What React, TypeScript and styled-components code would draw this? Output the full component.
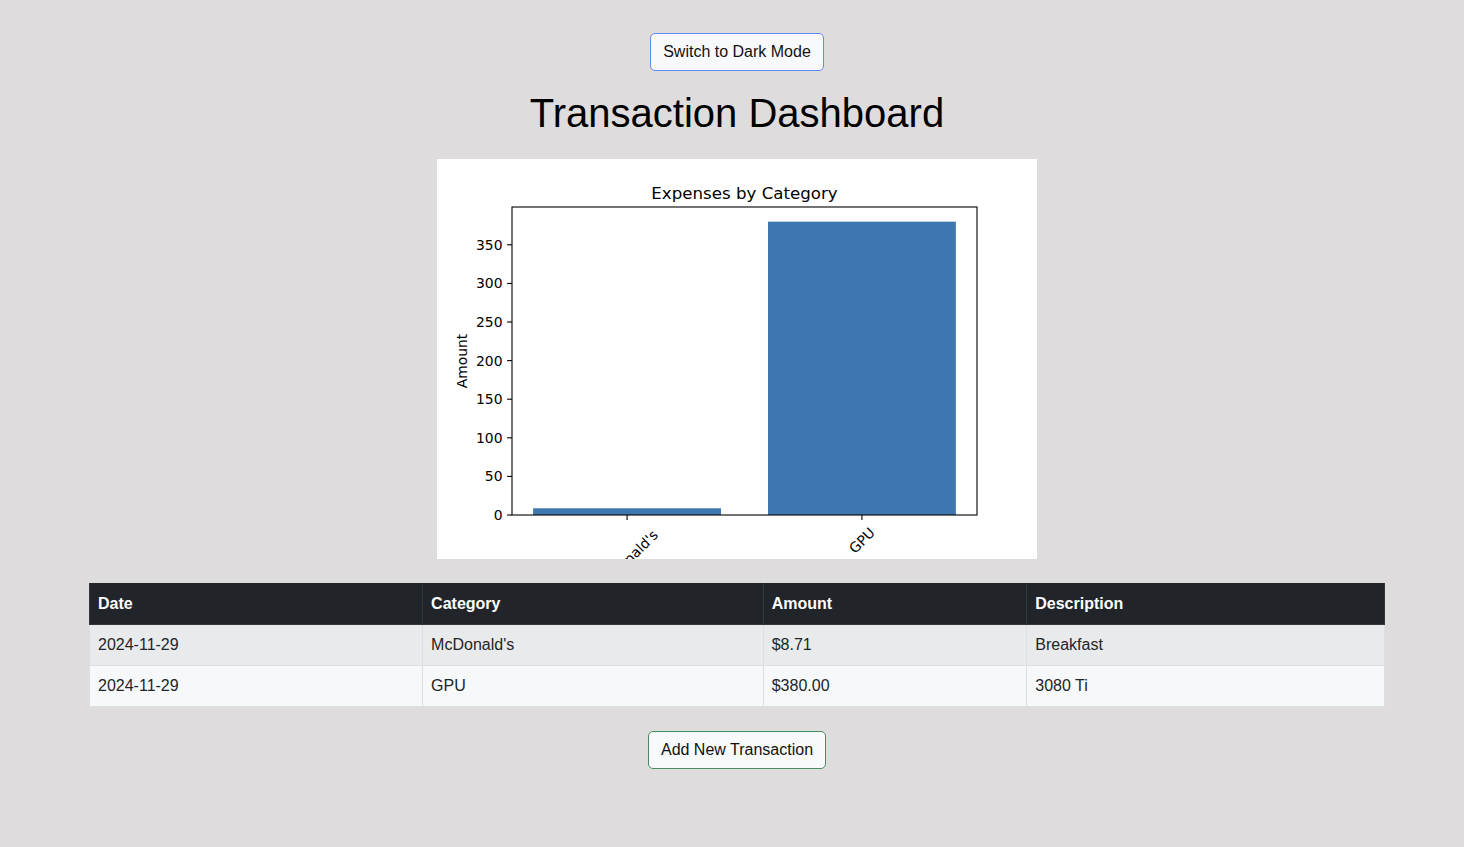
import React from "react";
import styled, { createGlobalStyle } from "styled-components";

const GlobalStyle = createGlobalStyle`
  html, body {
    margin: 0;
    padding: 0;
    background: #dedcdd;
    font-family: "Liberation Sans", Arial, sans-serif;
    color: #212529;
  }
`;

const Page = styled.div`
  padding: 33px 0 40px 10px;
  display: flex;
  flex-direction: column;
  align-items: center;
`;

const ActionButton = styled.button<{ $tone: "blue" | "green" }>`
  font-family: "Liberation Sans", Arial, sans-serif;
  font-size: 16px;
  line-height: 24px;
  padding: 6px 12px;
  background: #f8f9fa;
  color: #111;
  border: 1px solid ${(p) => (p.$tone === "blue" ? "#5b8cf2" : "#4a8c60")};
  border-radius: 5px;
  cursor: pointer;
`;

const Title = styled.h1`
  font-family: "Liberation Sans", Arial, sans-serif;
  font-weight: 400;
  font-size: 40px;
  line-height: 48px;
  margin: 18px 0 22px;
  color: #000;
`;

const ChartBox = styled.div`
  width: 600px;
  height: 400px;
  background: #ffffff;
  overflow: hidden;
  svg {
    display: block;
  }
`;

const Table = styled.table`
  width: 1296px;
  margin: 24px 0 24px;
  border-collapse: collapse;
  font-family: "Liberation Sans", Arial, sans-serif;
  font-size: 16px;
`;

const HeadCell = styled.th<{ $w: number }>`
  width: ${(p) => p.$w}px;
  text-align: left;
  background: #212529;
  color: #ffffff;
  font-weight: 700;
  padding: 9px 8px 8px;
  line-height: 24px;
  border: 1px solid #32383e;
  border-top: none;
`;

const Row = styled.tr<{ $odd: boolean }>`
  background: ${(p) => (p.$odd ? "#e9eaec" : "#f7f8fa")};
`;

const Cell = styled.td`
  padding: 8px 8px;
  line-height: 24px;
  color: #212529;
  border: 1px solid #dcdee1;
`;

const transactions = [
  { date: "2024-11-29", category: "McDonald's", amount: "$8.71", description: "Breakfast" },
  { date: "2024-11-29", category: "GPU", amount: "$380.00", description: "3080 Ti" },
];

const columns = [
  { label: "Date", w: 336 },
  { label: "Category", w: 341 },
  { label: "Amount", w: 260 },
  { label: "Description", w: 359 },
];

const ExpenseChart: React.FC = () => {
  const left = 75;
  const right = 540;
  const top = 48;
  const bottom = 356;
  const ymax = 399;
  const yScale = (v: number) => bottom - (v / ymax) * (bottom - top);
  const xUnit = (right - left) / 1.98;
  const xScale = (v: number) => left + (v + 0.49) * xUnit;
  const bars = [
    { label: "McDonald's", value: 8.71, pos: 0 },
    { label: "GPU", value: 380, pos: 1 },
  ];
  const ticks = [0, 50, 100, 150, 200, 250, 300, 350];
  const font = "'DejaVu Sans', sans-serif";
  return (
    <svg width={600} height={400} viewBox="0 0 600 400">
      <text x={307.5} y={40} textAnchor="middle" fontFamily={font} fontSize={16.67} fill="#000">
        Expenses by Category
      </text>
      {bars.map((b) => {
        const x0 = xScale(b.pos - 0.4);
        const x1 = xScale(b.pos + 0.4);
        const y = yScale(b.value);
        return <rect key={b.label} x={x0} y={y} width={x1 - x0} height={bottom - y} fill="#3e76b0" />;
      })}
      <rect x={left} y={top} width={right - left} height={bottom - top} fill="none" stroke="#000" strokeWidth={1.1} />
      {ticks.map((t) => {
        const y = yScale(t);
        return (
          <g key={t}>
            <line x1={left - 4.9} x2={left} y1={y} y2={y} stroke="#000" strokeWidth={1.1} />
            <text x={left - 9.5} y={y + 5} textAnchor="end" fontFamily={font} fontSize={13.9} fill="#000">
              {t}
            </text>
          </g>
        );
      })}
      {bars.map((b) => {
        const x = xScale(b.pos);
        const w = b.label.length * 8.2;
        const h = 16;
        const cy = bottom + 11 + ((w + h) * 0.7071) / 2;
        return (
          <g key={b.label + "t"}>
            <line x1={x} x2={x} y1={bottom} y2={bottom + 4.9} stroke="#000" strokeWidth={1.1} />
            <text
              x={x}
              y={cy}
              textAnchor="middle"
              dominantBaseline="central"
              transform={`rotate(-45 ${x} ${cy})`}
              fontFamily={font}
              fontSize={13.9}
              fill="#000"
            >
              {b.label}
            </text>
          </g>
        );
      })}
      <text
        x={30}
        y={(top + bottom) / 2}
        textAnchor="middle"
        transform={`rotate(-90 30 ${(top + bottom) / 2})`}
        fontFamily={font}
        fontSize={13.9}
        fill="#000"
      >
        Amount
      </text>
    </svg>
  );
};

export default function App() {
  return (
    <>
      <GlobalStyle />
      <Page>
        <ActionButton $tone="blue">Switch to Dark Mode</ActionButton>
        <Title>Transaction Dashboard</Title>
        <ChartBox>
          <ExpenseChart />
        </ChartBox>
        <Table>
          <thead>
            <tr>
              {columns.map((c) => (
                <HeadCell key={c.label} $w={c.w}>
                  {c.label}
                </HeadCell>
              ))}
            </tr>
          </thead>
          <tbody>
            {transactions.map((t, i) => (
              <Row key={i} $odd={i % 2 === 0}>
                <Cell>{t.date}</Cell>
                <Cell>{t.category}</Cell>
                <Cell>{t.amount}</Cell>
                <Cell>{t.description}</Cell>
              </Row>
            ))}
          </tbody>
        </Table>
        <ActionButton $tone="green">Add New Transaction</ActionButton>
      </Page>
    </>
  );
}
